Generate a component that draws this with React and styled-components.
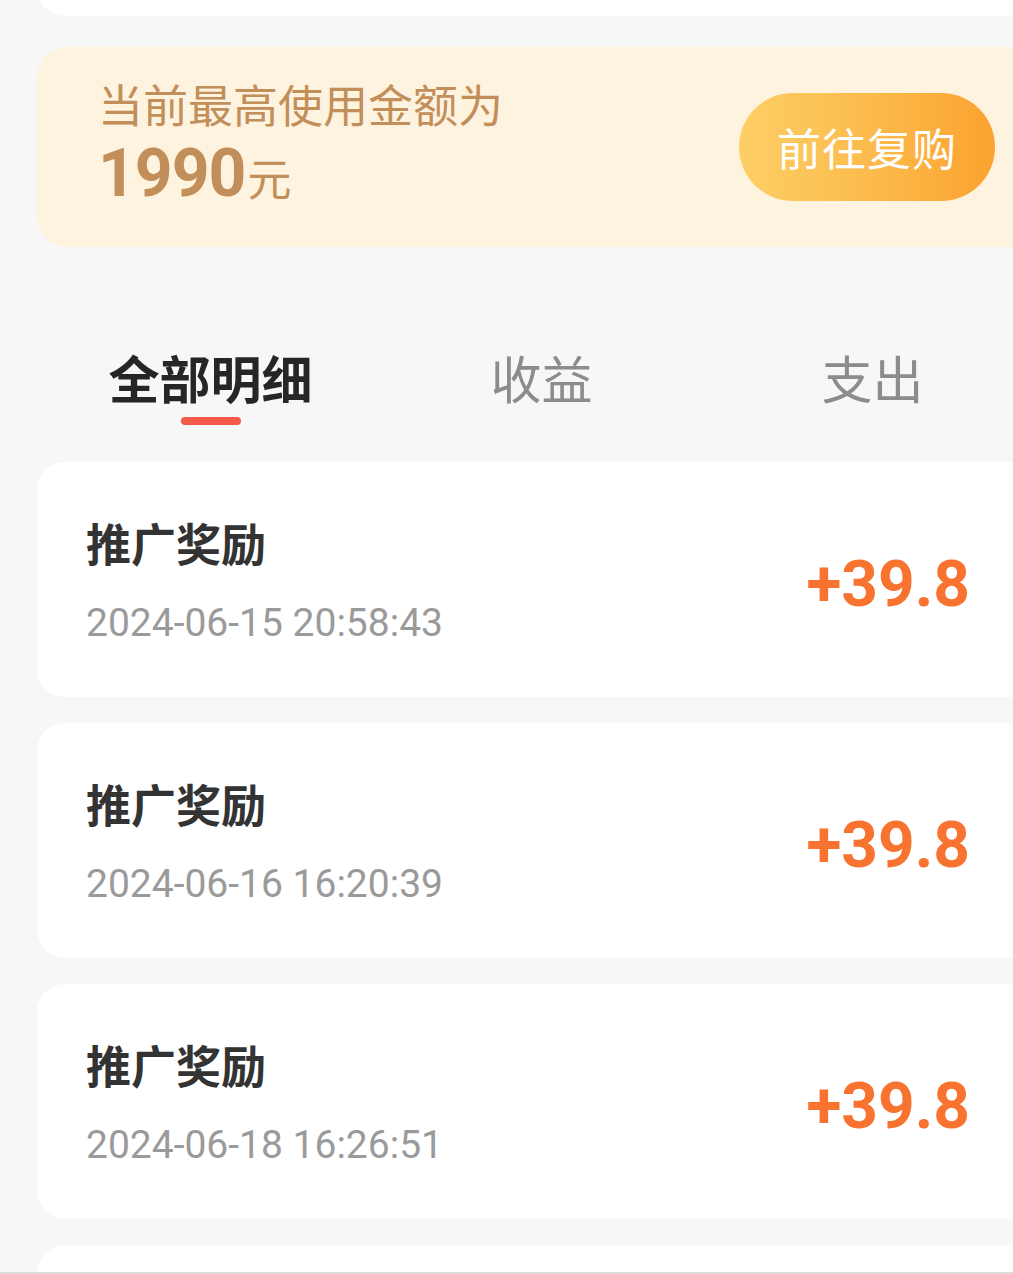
import React from 'react';
import styled, { createGlobalStyle } from 'styled-components';

const GlobalStyle = createGlobalStyle`
  html, body {
    margin: 0;
    padding: 0;
    background: #f7f7f7;
    overflow: hidden;
  }
  body {
    font-family: Roboto, "Noto Sans CJK SC", sans-serif;
  }
`;

const Screen = styled.div`
  height: 1274px;
  box-sizing: border-box;
  overflow: hidden;
  border-bottom: 2px solid #dcdcdc;
  background: #f7f7f7;
`;

const Page = styled.div`
  width: 1083px;
  box-sizing: border-box;
  padding: 0 37px;
`;

const TopCard = styled.div`
  height: 60px;
  margin-top: -44px;
  background: #ffffff;
  border-radius: 28px;
`;

const Promo = styled.div`
  margin-top: 31px;
  height: 200px;
  box-sizing: border-box;
  padding: 0 51px 0 61px;
  display: flex;
  align-items: center;
  justify-content: space-between;
  background: #fef3df;
  border-radius: 30px;
`;

const PromoText = styled.div`
  display: flex;
  flex-direction: column;
  gap: 4px;
  color: #c28f5b;
  margin-top: -4px;
`;

const PromoLabel = styled.div`
  font-family: "Noto Sans CJK SC", sans-serif;
  font-size: 45px;
  line-height: 56px;
`;

const PromoAmount = styled.div`
  font-family: Roboto, "Noto Sans CJK SC", sans-serif;
  font-size: 66px;
  font-weight: 700;
  line-height: 76px;
  letter-spacing: -1px;

  span {
    font-family: "Noto Sans CJK SC", sans-serif;
    font-size: 44px;
    font-weight: 400;
    letter-spacing: 0;
    margin-left: 2px;
  }
`;

const BuyButton = styled.button`
  width: 256px;
  height: 108px;
  border: none;
  border-radius: 54px;
  background: linear-gradient(90deg, #fdcf66 0%, #fcb94a 55%, #fba22f 100%);
  color: #ffffff;
  font-family: "Noto Sans CJK SC", sans-serif;
  font-size: 44px;
  letter-spacing: 1px;
  padding: 0;
  cursor: pointer;
`;

const Tabs = styled.div`
  margin-top: 98px;
  padding: 0 8px;
  display: grid;
  grid-template-columns: repeat(3, 1fr);
`;

const Tab = styled.div`
  display: flex;
  flex-direction: column;
  align-items: center;
  font-family: "Noto Sans CJK SC", sans-serif;
  font-size: 51px;
  line-height: 64px;
  font-weight: ${({ $active }) => ($active ? 700 : 400)};
  color: ${({ $active }) => ($active ? '#262626' : '#8c8c8c')};

  &::after {
    content: "";
    width: 60px;
    height: 8px;
    margin-top: 8px;
    border-radius: 4px;
    background: ${({ $active }) => ($active ? '#f4594a' : 'transparent')};
  }
`;

const List = styled.div`
  margin-top: 37px;
  display: flex;
  flex-direction: column;
  gap: 26px;
`;

const Item = styled.div`
  height: 235px;
  flex-shrink: 0;
  box-sizing: border-box;
  padding: 0 76px 0 49px;
  display: flex;
  align-items: center;
  justify-content: space-between;
  background: #ffffff;
  border-radius: 28px;
`;

const ItemInfo = styled.div`
  display: flex;
  flex-direction: column;
  gap: 32px;
  margin-top: 4px;
`;

const ItemTitle = styled.div`
  font-family: "Noto Sans CJK SC", sans-serif;
  font-size: 45px;
  font-weight: 700;
  line-height: 50px;
  color: #333333;
`;

const ItemDate = styled.div`
  font-family: Roboto, sans-serif;
  font-size: 39px;
  line-height: 46px;
  color: #9a9a9a;
`;

const Amount = styled.div`
  margin-top: 10px;
  font-family: Roboto, sans-serif;
  font-size: 64px;
  font-weight: 700;
  color: #f8732f;
`;

const items = [
  { title: '推广奖励', date: '2024-06-15 20:58:43', amount: '+39.8' },
  { title: '推广奖励', date: '2024-06-16 16:20:39', amount: '+39.8' },
  { title: '推广奖励', date: '2024-06-18 16:26:51', amount: '+39.8' },
];

export default function App() {
  return (
    <>
      <GlobalStyle />
      <Screen>
        <Page>
          <TopCard />
          <Promo>
            <PromoText>
              <PromoLabel>当前最高使用金额为</PromoLabel>
              <PromoAmount>
                1990<span>元</span>
              </PromoAmount>
            </PromoText>
            <BuyButton>前往复购</BuyButton>
          </Promo>
          <Tabs>
            <Tab $active>全部明细</Tab>
            <Tab>收益</Tab>
            <Tab>支出</Tab>
          </Tabs>
          <List>
            {items.map((it, i) => (
              <Item key={i}>
                <ItemInfo>
                  <ItemTitle>{it.title}</ItemTitle>
                  <ItemDate>{it.date}</ItemDate>
                </ItemInfo>
                <Amount>{it.amount}</Amount>
              </Item>
            ))}
            <Item />
          </List>
        </Page>
      </Screen>
    </>
  );
}
